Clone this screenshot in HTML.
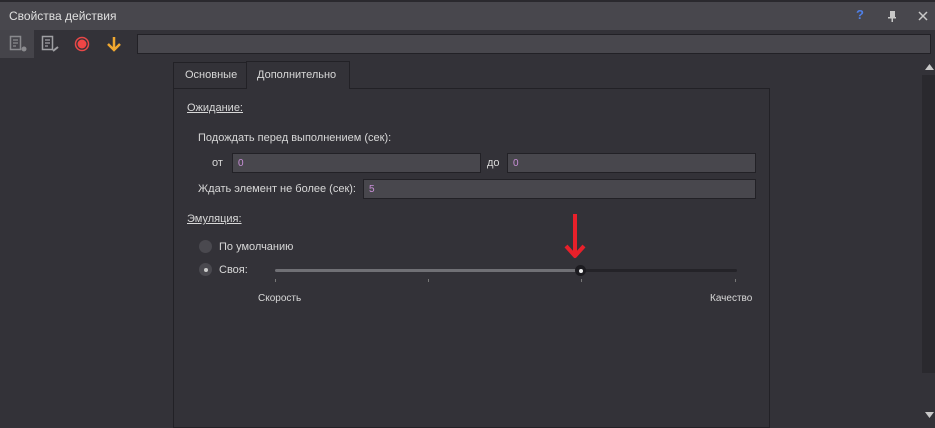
<!DOCTYPE html>
<html><head><meta charset="utf-8"><style>
*{margin:0;padding:0;box-sizing:border-box}
body{width:935px;height:423px;background:#333238;font-family:"Liberation Sans",sans-serif;font-size:11px;color:#d8d8d8;position:relative;overflow:hidden}
.a{position:absolute}
.inp{position:absolute;background:#48474d;border:1px solid #222126;height:20px;color:#c98fd8;font-size:10px;padding:4px 0 0 5px;font-family:"Liberation Sans",sans-serif}
.u{text-decoration:underline}
</style></head><body>
<div class="a" style="left:0;top:0;width:935px;height:30px;background:#48474d;border-top:2px solid #2a292e"></div>
<div class="a" style="left:9px;top:9px;font-size:12px;color:#e0e0e0">Свойства действия</div>
<div class="a" style="left:856px;top:7px;color:#4f7fe6;font-weight:bold;font-size:13px">?</div>
<svg class="a" style="left:886px;top:10px" width="12" height="12"><rect x="4" y="1" width="5" height="6" fill="#c8c8c8"/><rect x="2" y="7" width="8" height="1.5" fill="#c8c8c8"/><rect x="5.5" y="8" width="1.5" height="4" fill="#c8c8c8"/></svg>
<svg class="a" style="left:918px;top:11px" width="10" height="10"><path d="M1 1L9 9M9 1L1 9" stroke="#c8c8c8" stroke-width="1.5"/></svg>
<div class="a" style="left:0;top:30px;width:34px;height:28px;background:#45444a"></div>
<svg class="a" style="left:9px;top:35px" width="20" height="18"><rect x="1.5" y="1.5" width="10" height="13" fill="none" stroke="#8a8a8e" stroke-width="1.5"/><path d="M4 5h5M4 8h5M4 11h3" stroke="#8a8a8e" stroke-width="1.3"/><circle cx="15" cy="14" r="2.5" fill="#8a8a8e"/></svg>
<svg class="a" style="left:41px;top:35px" width="20" height="18"><rect x="1.5" y="1.5" width="10" height="13" fill="none" stroke="#a0a0a4" stroke-width="1.5"/><path d="M4 5h5M4 8h5M4 11h3" stroke="#a0a0a4" stroke-width="1.3"/><path d="M12 16l5-4" stroke="#a0a0a4" stroke-width="2"/></svg>
<svg class="a" style="left:74px;top:36px" width="16" height="16"><circle cx="8" cy="8" r="6.5" fill="none" stroke="#e84848" stroke-width="1.5"/><circle cx="8" cy="8" r="4.5" fill="#f04545"/></svg>
<svg class="a" style="left:106px;top:36px" width="16" height="16"><path d="M8 1v12M2 8l6 6 6-6" fill="none" stroke="#f0a830" stroke-width="2.5"/></svg>
<div class="a" style="left:137px;top:34px;width:794px;height:20px;background:#48474d;border:1px solid #222126"></div>
<div class="a" style="left:173px;top:62px;width:74px;height:26px;background:#333238;border:1px solid #222126;border-bottom:none"></div>
<div class="a" style="left:185px;top:69px;font-size:11px">Основные</div>
<div class="a" style="left:246px;top:61px;width:104px;height:28px;background:#333238;border:1px solid #222126;border-bottom:none;z-index:2"></div>
<div class="a" style="left:257px;top:69px;font-size:11px;z-index:3">Дополнительно</div>
<div class="a" style="left:173px;top:88px;width:597px;height:340px;border:1px solid #222126"></div>
<div class="a u" style="left:187px;top:102px">Ожидание:</div>
<div class="a" style="left:198px;top:132px">Подождать перед выполнением (сек):</div>
<div class="a" style="left:212px;top:157px">от</div>
<div class="inp" style="left:232px;top:153px;width:249px">0</div>
<div class="a" style="left:487px;top:157px">до</div>
<div class="inp" style="left:507px;top:153px;width:249px">0</div>
<div class="a" style="left:198px;top:183px">Ждать элемент не более (сек):</div>
<div class="inp" style="left:363px;top:179px;width:393px">5</div>
<div class="a u" style="left:187px;top:213px">Эмуляция:</div>
<div class="a" style="left:199px;top:240px;width:13px;height:13px;border-radius:50%;background:#4a494f"></div>
<div class="a" style="left:219px;top:241px">По умолчанию</div>
<div class="a" style="left:199px;top:263px;width:13px;height:13px;border-radius:50%;background:#4a494f"></div>
<div class="a" style="left:203.5px;top:267.5px;width:4px;height:4px;border-radius:50%;background:#ccc"></div>
<div class="a" style="left:219px;top:264px">Своя:</div>
<div class="a" style="left:275px;top:269px;width:306px;height:3px;background:#707075;border-radius:2px"></div>
<div class="a" style="left:581px;top:269px;width:156px;height:3px;background:#242328;border-radius:2px"></div>
<div class="a" style="left:575px;top:265px;width:11px;height:11px;border-radius:50%;background:#1c1b20"></div>
<div class="a" style="left:578.5px;top:268.5px;width:4px;height:4px;border-radius:50%;background:#eee"></div>
<div class="a" style="left:275px;top:279px;width:1px;height:3px;background:#777"></div>
<div class="a" style="left:428px;top:279px;width:1px;height:3px;background:#777"></div>
<div class="a" style="left:581px;top:279px;width:1px;height:3px;background:#777"></div>
<div class="a" style="left:735px;top:279px;width:1px;height:3px;background:#777"></div>
<svg class="a" style="left:562px;top:213px" width="26" height="48"><path d="M13 1v40M4 33l9 10 9-10" fill="none" stroke="#e8202a" stroke-width="4" stroke-linejoin="round"/></svg>
<div class="a" style="left:258px;top:293px;font-size:10px">Скорость</div>
<div class="a" style="left:710px;top:293px;font-size:10px">Качество</div>
<div class="a" style="left:922px;top:75px;width:13px;height:298px;background:#2a292e"></div>
<svg class="a" style="left:925px;top:64px" width="9" height="6"><path d="M0 6L4.5 0 9 6z" fill="#c8c8c8"/></svg>
<svg class="a" style="left:925px;top:412px" width="9" height="6"><path d="M0 0L4.5 6 9 0z" fill="#c8c8c8"/></svg>
</body></html>
